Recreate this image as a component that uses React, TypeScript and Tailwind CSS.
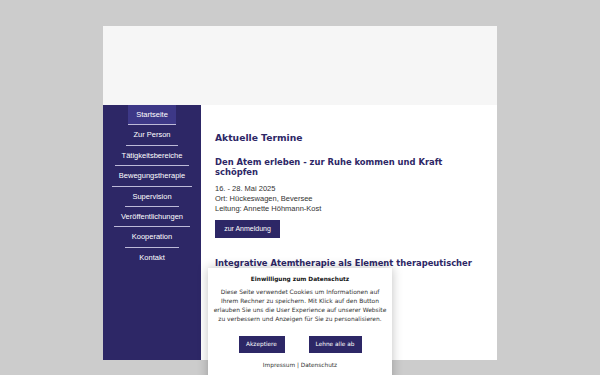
import React from "react";

const navItems = [
  "Startseite",
  "Zur Person",
  "Tätigkeitsbereiche",
  "Bewegungstherapie",
  "Supervision",
  "Veröffentlichungen",
  "Kooperation",
  "Kontakt",
];

export default function App() {
  return (
    <div
      className="relative h-[375px] w-[600px] overflow-hidden bg-[#cccccc] pt-[26px]"
      style={{ fontFamily: '"DejaVu Sans", sans-serif' }}
    >
      <div className="ml-[103px] w-[394px]">
        <div className="h-[79px] bg-[#f6f6f6]" />
        <div className="flex h-[255px]">
          <nav className="flex w-[98px] flex-col items-center bg-[#2d2766]">
            {navItems.map((item, i) => (
              <div
                key={item}
                className={
                  "flex h-[20.4px] items-center px-[7px] text-white " +
                  (i === 0 ? "bg-[#3d3887] px-[8px] " : "") +
                  (i < navItems.length - 1 ? "border-b border-[#bdbad8]" : "")
                }
                style={{ fontFamily: '"Liberation Sans", Arial, sans-serif', fontSize: "7.5px" }}
              >
                {item}
              </div>
            ))}
          </nav>
          <main className="flex-1 overflow-hidden bg-white pl-[14px] pt-[27px] text-[#2d2766]">
            <h1 className="text-[9.2px] font-bold leading-[12px]">Aktuelle Termine</h1>
            <h2 className="mt-[13px] w-[265px] text-[8.4px] font-bold leading-[10px]">
              Den Atem erleben - zur Ruhe kommen und Kraft schöpfen
            </h2>
            <div
              className="mt-[7px] text-[7.5px] leading-[10px] text-[#333333]"
              style={{ fontFamily: '"Liberation Sans", Arial, sans-serif' }}
            >
              <p>16. - 28. Mai 2025</p>
              <p>Ort: Hückeswagen, Beversee</p>
              <p>Leitung: Annette Höhmann-Kost</p>
            </div>
            <button
              className="mt-[6px] flex h-[18px] w-[65px] items-center justify-center bg-[#2d2766] text-[7px] text-white"
              style={{ fontFamily: '"Liberation Sans", Arial, sans-serif' }}
            >
              zur Anmeldung
            </button>
            <h2 className="mt-[20px] w-[275px] whitespace-nowrap text-[8.4px] font-bold leading-[10px]">
              Integrative Atemtherapie als Element therapeutischer
            </h2>
          </main>
        </div>
      </div>

      <div className="absolute left-[208px] top-[268px] h-[120px] w-[184px] bg-white pt-[7px] text-center shadow-[0_0_10px_rgba(0,0,0,0.25)]">
        <p className="text-[5.8px] font-bold leading-[8px] text-[#111]">Einwilligung zum Datenschutz</p>
        <p className="mt-[4px] text-[5.95px] leading-[9px] text-[#333]">
          Diese Seite verwendet Cookies um Informationen auf
          <br />
          Ihrem Rechner zu speichern. Mit Klick auf den Button
          <br />
          erlauben Sie uns die User Experience auf unserer Website
          <br />
          zu verbessern und Anzeigen für Sie zu personalisieren.
        </p>
        <div className="mt-[13px] flex justify-center gap-[24px]">
          <button className="flex h-[17px] w-[46px] items-center justify-center bg-[#2d2766] text-[5.8px] text-white">
            Akzeptiere
          </button>
          <button className="flex h-[17px] w-[53px] items-center justify-center bg-[#2d2766] text-[5.8px] text-white">
            Lehne alle ab
          </button>
        </div>
        <p className="mt-[8px] text-[5.8px] leading-[8px] text-[#333]">Impressum | Datenschutz</p>
      </div>
    </div>
  );
}
